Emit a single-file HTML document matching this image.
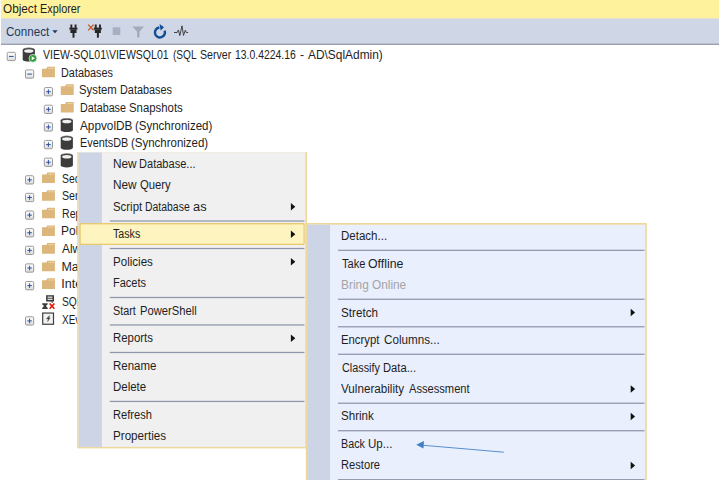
<!DOCTYPE html><html><head><meta charset="utf-8"><title>Object Explorer</title><style>
html,body{margin:0;padding:0;background:#fff;}
body{width:719px;height:489px;position:relative;overflow:hidden;font-family:"Liberation Sans", sans-serif;}
.a{position:absolute;}
.t{position:absolute;white-space:pre;transform-origin:0 0;line-height:16px;height:16px;}
.sep{position:absolute;height:1px;background:#a4abbd;}
</style></head><body>
<svg class="a" style="left:0;top:0" width="719" height="46" viewBox="0 0 719 46"><rect x="1" y="18" width="718" height="26.5" fill="#cfd6e5"/><rect x="1" y="0" width="718" height="18.4" fill="#fff29d"/><rect x="1" y="43.7" width="718" height="1.15" fill="#8c919f"/></svg>
<svg class="a" style="left:0;top:0" width="719" height="489" viewBox="0 0 719 489">
<defs><linearGradient id="bx" x1="0" y1="0" x2="0" y2="1"><stop offset="0" stop-color="#ffffff"/><stop offset="1" stop-color="#dcdcdc"/></linearGradient></defs>
<path d="M52.3 30.3 L57.7 30.3 L55 33.2 Z" fill="#1e395b"/>
<rect x="70.4" y="24.5" width="1.9" height="3.4" fill="#262626"/>
<rect x="74.6" y="24.5" width="1.9" height="3.4" fill="#262626"/>
<rect x="69.4" y="27.6" width="8" height="2.1" fill="#262626"/>
<rect x="70.4" y="29.5" width="6.1" height="3.5" fill="#262626"/>
<rect x="72.5" y="32.8" width="2" height="4.9" fill="#262626"/>
<rect x="94.8" y="24.5" width="1.9" height="3.4" fill="#262626"/>
<rect x="99.0" y="24.5" width="1.9" height="3.4" fill="#262626"/>
<rect x="93.8" y="27.6" width="8" height="2.1" fill="#262626"/>
<rect x="94.8" y="29.5" width="6.1" height="3.5" fill="#262626"/>
<rect x="96.9" y="32.8" width="2" height="4.9" fill="#262626"/>
<path d="M88.2 24.6 L93.6 30.4 M93.6 24.6 L88.2 30.4" stroke="#c4541d" stroke-width="1.3" fill="none"/>
<rect x="112.7" y="27.3" width="7.6" height="7.7" fill="#a8afc3"/>
<path d="M132.5 26.4 L144 26.4 L139.5 31.8 L139.5 37.5 L137.1 37.5 L137.1 31.8 Z" fill="#a3aabc"/>
<path d="M164.6 30.6 A5 5 0 1 1 159.4 27.45" stroke="#0f4d95" stroke-width="2.4" fill="none"/>
<path d="M159.6 23.9 L164.0 27.3 L160.6 30.6 Z" fill="#0f4d95"/>
<path d="M174 32.5 L177.2 32.5 L178.4 30.0 L179.8 35.6 L182 25.8 L183.5 35.4 L185.3 30.2 L186.3 32.5 L188.1 32.5" stroke="#333" stroke-width="0.9" fill="none" stroke-linejoin="round"/>
<rect x="7.20" y="52.30" width="8.2" height="8.3" rx="1.2" fill="url(#bx)" stroke="#8f8f8f" stroke-width="0.9"/>
<path d="M9.00 56.45 L13.60 56.45" stroke="#2f52a3" stroke-width="1.0"/>
<path d="M22.70 49.70 A6.10 2.0 0 0 1 34.90 49.70 L34.90 59.70 A6.10 1.9 0 0 1 22.70 59.70 Z" fill="#3c3c3c"/>
<path d="M23.00 49.70 A5.80 1.8 0 0 1 34.60 49.70" fill="none" stroke="#8a8a8a" stroke-width="0.6"/>
<ellipse cx="28.80" cy="50.90" rx="4.7" ry="1.75" fill="#f0f0f0"/>
<circle cx="32.9" cy="58.30" r="3.9" fill="#2e9b34" stroke="#e6f2e6" stroke-width="0.7"/>
<path d="M31.7 56.30 L35.0 58.30 L31.7 60.30 Z" fill="#ffffff"/>
<rect x="25.50" y="69.93" width="8.2" height="8.3" rx="1.2" fill="url(#bx)" stroke="#8f8f8f" stroke-width="0.9"/>
<path d="M27.30 74.08 L31.90 74.08" stroke="#2f52a3" stroke-width="1.0"/>
<path d="M42.00 68.63 L46.30 68.63 L47.30 66.73 L54.90 66.73 L54.90 77.33 L42.00 77.33 Z" fill="#dcb67a"/>
<rect x="48.20" y="67.93" width="5.8" height="0.9" fill="#ecd6b0"/>
<rect x="44.30" y="87.56" width="8.2" height="8.3" rx="1.2" fill="url(#bx)" stroke="#8f8f8f" stroke-width="0.9"/>
<path d="M46.10 91.71 L50.70 91.71" stroke="#2f52a3" stroke-width="1.0"/>
<path d="M48.40 89.41 L48.40 94.01" stroke="#2f52a3" stroke-width="1.0"/>
<path d="M60.80 86.26 L65.10 86.26 L66.10 84.36 L73.70 84.36 L73.70 94.96 L60.80 94.96 Z" fill="#dcb67a"/>
<rect x="67.00" y="85.56" width="5.8" height="0.9" fill="#ecd6b0"/>
<rect x="44.30" y="105.19" width="8.2" height="8.3" rx="1.2" fill="url(#bx)" stroke="#8f8f8f" stroke-width="0.9"/>
<path d="M46.10 109.34 L50.70 109.34" stroke="#2f52a3" stroke-width="1.0"/>
<path d="M48.40 107.04 L48.40 111.64" stroke="#2f52a3" stroke-width="1.0"/>
<path d="M60.80 103.89 L65.10 103.89 L66.10 101.99 L73.70 101.99 L73.70 112.59 L60.80 112.59 Z" fill="#dcb67a"/>
<rect x="67.00" y="103.19" width="5.8" height="0.9" fill="#ecd6b0"/>
<rect x="44.30" y="122.82" width="8.2" height="8.3" rx="1.2" fill="url(#bx)" stroke="#8f8f8f" stroke-width="0.9"/>
<path d="M46.10 126.97 L50.70 126.97" stroke="#2f52a3" stroke-width="1.0"/>
<path d="M48.40 124.67 L48.40 129.27" stroke="#2f52a3" stroke-width="1.0"/>
<path d="M60.70 120.22 A6.10 2.0 0 0 1 72.90 120.22 L72.90 130.22 A6.10 1.9 0 0 1 60.70 130.22 Z" fill="#3c3c3c"/>
<path d="M61.00 120.22 A5.80 1.8 0 0 1 72.60 120.22" fill="none" stroke="#8a8a8a" stroke-width="0.6"/>
<ellipse cx="66.80" cy="121.42" rx="4.7" ry="1.75" fill="#f0f0f0"/>
<rect x="44.30" y="140.45" width="8.2" height="8.3" rx="1.2" fill="url(#bx)" stroke="#8f8f8f" stroke-width="0.9"/>
<path d="M46.10 144.60 L50.70 144.60" stroke="#2f52a3" stroke-width="1.0"/>
<path d="M48.40 142.30 L48.40 146.90" stroke="#2f52a3" stroke-width="1.0"/>
<path d="M60.70 137.85 A6.10 2.0 0 0 1 72.90 137.85 L72.90 147.85 A6.10 1.9 0 0 1 60.70 147.85 Z" fill="#3c3c3c"/>
<path d="M61.00 137.85 A5.80 1.8 0 0 1 72.60 137.85" fill="none" stroke="#8a8a8a" stroke-width="0.6"/>
<ellipse cx="66.80" cy="139.05" rx="4.7" ry="1.75" fill="#f0f0f0"/>
<rect x="44.30" y="158.08" width="8.2" height="8.3" rx="1.2" fill="url(#bx)" stroke="#8f8f8f" stroke-width="0.9"/>
<path d="M46.10 162.23 L50.70 162.23" stroke="#2f52a3" stroke-width="1.0"/>
<path d="M48.40 159.93 L48.40 164.53" stroke="#2f52a3" stroke-width="1.0"/>
<path d="M60.70 155.48 A6.10 2.0 0 0 1 72.90 155.48 L72.90 165.48 A6.10 1.9 0 0 1 60.70 165.48 Z" fill="#3c3c3c"/>
<path d="M61.00 155.48 A5.80 1.8 0 0 1 72.60 155.48" fill="none" stroke="#8a8a8a" stroke-width="0.6"/>
<ellipse cx="66.80" cy="156.68" rx="4.7" ry="1.75" fill="#f0f0f0"/>
<rect x="25.50" y="175.71" width="8.2" height="8.3" rx="1.2" fill="url(#bx)" stroke="#8f8f8f" stroke-width="0.9"/>
<path d="M27.30 179.86 L31.90 179.86" stroke="#2f52a3" stroke-width="1.0"/>
<path d="M29.60 177.56 L29.60 182.16" stroke="#2f52a3" stroke-width="1.0"/>
<path d="M42.00 174.41 L46.30 174.41 L47.30 172.51 L54.90 172.51 L54.90 183.11 L42.00 183.11 Z" fill="#dcb67a"/>
<rect x="48.20" y="173.71" width="5.8" height="0.9" fill="#ecd6b0"/>
<rect x="25.50" y="193.34" width="8.2" height="8.3" rx="1.2" fill="url(#bx)" stroke="#8f8f8f" stroke-width="0.9"/>
<path d="M27.30 197.49 L31.90 197.49" stroke="#2f52a3" stroke-width="1.0"/>
<path d="M29.60 195.19 L29.60 199.79" stroke="#2f52a3" stroke-width="1.0"/>
<path d="M42.00 192.04 L46.30 192.04 L47.30 190.14 L54.90 190.14 L54.90 200.74 L42.00 200.74 Z" fill="#dcb67a"/>
<rect x="48.20" y="191.34" width="5.8" height="0.9" fill="#ecd6b0"/>
<rect x="25.50" y="210.97" width="8.2" height="8.3" rx="1.2" fill="url(#bx)" stroke="#8f8f8f" stroke-width="0.9"/>
<path d="M27.30 215.12 L31.90 215.12" stroke="#2f52a3" stroke-width="1.0"/>
<path d="M29.60 212.82 L29.60 217.42" stroke="#2f52a3" stroke-width="1.0"/>
<path d="M42.00 209.67 L46.30 209.67 L47.30 207.77 L54.90 207.77 L54.90 218.37 L42.00 218.37 Z" fill="#dcb67a"/>
<rect x="48.20" y="208.97" width="5.8" height="0.9" fill="#ecd6b0"/>
<rect x="25.50" y="228.60" width="8.2" height="8.3" rx="1.2" fill="url(#bx)" stroke="#8f8f8f" stroke-width="0.9"/>
<path d="M27.30 232.75 L31.90 232.75" stroke="#2f52a3" stroke-width="1.0"/>
<path d="M29.60 230.45 L29.60 235.05" stroke="#2f52a3" stroke-width="1.0"/>
<path d="M42.00 227.30 L46.30 227.30 L47.30 225.40 L54.90 225.40 L54.90 236.00 L42.00 236.00 Z" fill="#dcb67a"/>
<rect x="48.20" y="226.60" width="5.8" height="0.9" fill="#ecd6b0"/>
<rect x="25.50" y="246.23" width="8.2" height="8.3" rx="1.2" fill="url(#bx)" stroke="#8f8f8f" stroke-width="0.9"/>
<path d="M27.30 250.38 L31.90 250.38" stroke="#2f52a3" stroke-width="1.0"/>
<path d="M29.60 248.08 L29.60 252.68" stroke="#2f52a3" stroke-width="1.0"/>
<path d="M42.00 244.93 L46.30 244.93 L47.30 243.03 L54.90 243.03 L54.90 253.63 L42.00 253.63 Z" fill="#dcb67a"/>
<rect x="48.20" y="244.23" width="5.8" height="0.9" fill="#ecd6b0"/>
<rect x="25.50" y="263.86" width="8.2" height="8.3" rx="1.2" fill="url(#bx)" stroke="#8f8f8f" stroke-width="0.9"/>
<path d="M27.30 268.01 L31.90 268.01" stroke="#2f52a3" stroke-width="1.0"/>
<path d="M29.60 265.71 L29.60 270.31" stroke="#2f52a3" stroke-width="1.0"/>
<path d="M42.00 262.56 L46.30 262.56 L47.30 260.66 L54.90 260.66 L54.90 271.26 L42.00 271.26 Z" fill="#dcb67a"/>
<rect x="48.20" y="261.86" width="5.8" height="0.9" fill="#ecd6b0"/>
<rect x="25.50" y="281.49" width="8.2" height="8.3" rx="1.2" fill="url(#bx)" stroke="#8f8f8f" stroke-width="0.9"/>
<path d="M27.30 285.64 L31.90 285.64" stroke="#2f52a3" stroke-width="1.0"/>
<path d="M29.60 283.34 L29.60 287.94" stroke="#2f52a3" stroke-width="1.0"/>
<path d="M42.00 280.19 L46.30 280.19 L47.30 278.29 L54.90 278.29 L54.90 288.89 L42.00 288.89 Z" fill="#dcb67a"/>
<rect x="48.20" y="279.49" width="5.8" height="0.9" fill="#ecd6b0"/>
<rect x="46.1" y="295.22" width="7.9" height="6.3" fill="#3b3b3b"/>
<path d="M50.6 301.42 L53.2 301.42 L52.4 302.92 Z" fill="#3b3b3b"/>
<rect x="47.6" y="296.62" width="4.9" height="1.1" fill="#fff"/><rect x="47.6" y="298.72" width="4.9" height="1.1" fill="#fff"/>
<path d="M42.2 303.22 L47.7 303.22 L47.7 304.22 L45.9 306.12 L47.7 307.92 L47.7 308.92 L42.2 308.92 L42.2 307.92 L44.0 306.12 L42.2 304.22 Z" fill="#3b3b3b"/>
<path d="M49.6 303.52 L54.4 308.72 M54.4 303.52 L49.6 308.72" stroke="#e81500" stroke-width="1.6"/>
<rect x="25.50" y="316.75" width="8.2" height="8.3" rx="1.2" fill="url(#bx)" stroke="#8f8f8f" stroke-width="0.9"/>
<path d="M27.30 320.90 L31.90 320.90" stroke="#2f52a3" stroke-width="1.0"/>
<path d="M29.60 318.60 L29.60 323.20" stroke="#2f52a3" stroke-width="1.0"/>
<rect x="42.7" y="313.05" width="10.8" height="11.2" fill="#f2f2f2" stroke="#3f3f3f" stroke-width="1.2"/>
<path d="M49.6 315.55 L46.4 318.85 L48.4 318.85 L47.6 321.55 L50.2 317.85 L48.6 317.85 Z" fill="#3b3b3b" stroke="#3b3b3b" stroke-width="0.4"/>
</svg>
<div class="t" style="left:3.00px;top:1.00px;font-size:12.5px;color:#1e1e1e;transform:scaleX(0.9402);">Object</div>
<div class="t" style="left:39.86px;top:1.00px;font-size:12.5px;color:#1e1e1e;transform:scaleX(0.8690);">Explorer</div>
<div class="t" style="left:5.78px;top:24.00px;font-size:12.5px;color:#1e395b;transform:scaleX(0.9277);">Connect</div>
<div class="t" style="left:42.65px;top:47.00px;font-size:12.5px;color:#1e1e1e;transform:scaleX(0.8422);">VIEW-SQL01\VIEWSQL01</div>
<div class="t" style="left:173.01px;top:47.00px;font-size:12.5px;color:#1e1e1e;transform:scaleX(0.8092);">(SQL</div>
<div class="t" style="left:200.18px;top:47.00px;font-size:12.5px;color:#1e1e1e;transform:scaleX(0.8498);">Server</div>
<div class="t" style="left:235.22px;top:47.00px;font-size:12.5px;color:#1e1e1e;transform:scaleX(0.8318);">13.0.4224.16</div>
<div class="t" style="left:299.89px;top:47.00px;font-size:12.5px;color:#1e1e1e;transform:scaleX(0.9720);">-</div>
<div class="t" style="left:307.64px;top:47.00px;font-size:12.5px;color:#1e1e1e;transform:scaleX(0.9529);">AD\SqlAdmin)</div>
<div class="t" style="left:61.46px;top:65.00px;font-size:12.5px;color:#1e1e1e;transform:scaleX(0.8706);">Databases</div>
<div class="t" style="left:79.32px;top:82.00px;font-size:12.5px;color:#1e1e1e;transform:scaleX(0.9070);">System</div>
<div class="t" style="left:119.96px;top:82.00px;font-size:12.5px;color:#1e1e1e;transform:scaleX(0.8689);">Databases</div>
<div class="t" style="left:79.77px;top:100.00px;font-size:12.5px;color:#1e1e1e;transform:scaleX(0.8582);">Database</div>
<div class="t" style="left:129.02px;top:100.00px;font-size:12.5px;color:#1e1e1e;transform:scaleX(0.9101);">Snapshots</div>
<div class="t" style="left:79.85px;top:118.00px;font-size:12.5px;color:#1e1e1e;transform:scaleX(0.9427);">AppvolDB</div>
<div class="t" style="left:134.89px;top:118.00px;font-size:12.5px;color:#1e1e1e;transform:scaleX(0.9187);">(Synchronized)</div>
<div class="t" style="left:79.76px;top:135.00px;font-size:12.5px;color:#1e1e1e;transform:scaleX(0.8696);">EventsDB</div>
<div class="t" style="left:130.59px;top:135.00px;font-size:12.5px;color:#1e1e1e;transform:scaleX(0.9175);">(Synchronized)</div>
<div class="t" style="left:61.60px;top:171.00px;font-size:12.5px;color:#1e1e1e;transform:scaleX(0.8300);">Security</div>
<div class="t" style="left:61.58px;top:188.00px;font-size:12.5px;color:#1e1e1e;transform:scaleX(0.8500);">Server Objects</div>
<div class="t" style="left:61.59px;top:206.00px;font-size:12.5px;color:#1e1e1e;transform:scaleX(0.8450);">Replication</div>
<div class="t" style="left:61.46px;top:223.00px;font-size:12.5px;color:#1e1e1e;transform:scaleX(0.9600);">PolyBase</div>
<div class="t" style="left:62.35px;top:241.00px;font-size:12.5px;color:#1e1e1e;transform:scaleX(0.9500);">Always On High Availability</div>
<div class="t" style="left:61.42px;top:259.00px;font-size:12.5px;color:#1e1e1e;transform:scaleX(1.0000);">Management</div>
<div class="t" style="left:61.36px;top:276.00px;font-size:12.5px;color:#1e1e1e;transform:scaleX(1.0000);">Integration Services Catalogs</div>
<div class="t" style="left:61.61px;top:294.00px;font-size:12.5px;color:#1e1e1e;transform:scaleX(0.8200);">SQL Server Agent (Agent XPs disabled)</div>
<div class="t" style="left:62.25px;top:312.00px;font-size:12.5px;color:#1e1e1e;transform:scaleX(0.8000);">XEvent Profiler</div>
<svg class="a" style="left:0;top:0" width="719" height="489" viewBox="0 0 719 489">
<rect x="77.2" y="152.2" width="229.8" height="296.20" fill="#efd89c"/>
<rect x="78.7" y="152.2" width="226.7" height="294.70" fill="#f0f0f0"/>
<rect x="78.7" y="152.6" width="23.2" height="294.30" fill="#cdd4e6"/>
<rect x="109.8" y="220.40" width="194.6" height="1.25" fill="#8f97ac"/>
<rect x="109.8" y="247.90" width="194.6" height="1.25" fill="#8f97ac"/>
<rect x="109.8" y="296.85" width="194.6" height="1.25" fill="#8f97ac"/>
<rect x="109.8" y="324.35" width="194.6" height="1.25" fill="#8f97ac"/>
<rect x="109.8" y="351.85" width="194.6" height="1.25" fill="#8f97ac"/>
<rect x="109.8" y="400.80" width="194.6" height="1.25" fill="#8f97ac"/>
<rect x="79.5" y="223.05" width="225.2" height="21.9" rx="1.2" fill="#e7c96f"/>
<rect x="80.7" y="224.40" width="222.8" height="19.3" fill="#fdf4bf"/>
<path d="M290.90 203.10 L295.30 206.80 L290.90 210.50 Z" fill="#111"/>
<path d="M290.90 230.60 L295.30 234.30 L290.90 238.00 Z" fill="#111"/>
<path d="M290.90 258.10 L295.30 261.80 L290.90 265.50 Z" fill="#111"/>
<path d="M290.90 334.55 L295.30 338.25 L290.90 341.95 Z" fill="#111"/>
<rect x="305.8" y="223.0" width="341" height="257" fill="#efd89c"/>
<rect x="307.1" y="224.7" width="338.0" height="255.3" fill="#eaeffd"/>
<rect x="307.1" y="224.7" width="23.0" height="255.3" fill="#cdd4e6"/>
<rect x="338" y="249.70" width="306.5" height="1.25" fill="#8f97ac"/>
<rect x="338" y="298.65" width="306.5" height="1.25" fill="#8f97ac"/>
<rect x="338" y="326.15" width="306.5" height="1.25" fill="#8f97ac"/>
<rect x="338" y="353.65" width="306.5" height="1.25" fill="#8f97ac"/>
<rect x="338" y="402.60" width="306.5" height="1.25" fill="#8f97ac"/>
<rect x="338" y="430.10" width="306.5" height="1.25" fill="#8f97ac"/>
<rect x="338" y="479.05" width="306.5" height="1.25" fill="#8f97ac"/>
<path d="M630.70 308.85 L635.10 312.55 L630.70 316.25 Z" fill="#111"/>
<path d="M630.70 385.30 L635.10 389.00 L630.70 392.70 Z" fill="#111"/>
<path d="M630.70 412.80 L635.10 416.50 L630.70 420.20 Z" fill="#111"/>
<path d="M630.70 461.75 L635.10 465.45 L630.70 469.15 Z" fill="#111"/>
<rect x="0" y="480" width="719" height="9" fill="#fff"/>
<line x1="421" y1="445.1" x2="503.8" y2="452.2" stroke="#4583c6" stroke-width="0.9"/><path d="M416.2 444.7 L423.9 441.0 L423.5 448.5 Z" fill="#3f7fc4"/>
</svg>
<div class="t" style="left:112.78px;top:156.00px;font-size:12.5px;color:#1e1e1e;transform:scaleX(0.9450);">New</div>
<div class="t" style="left:139.35px;top:156.00px;font-size:12.5px;color:#1e1e1e;transform:scaleX(0.8849);">Database...</div>
<div class="t" style="left:112.78px;top:177.00px;font-size:12.5px;color:#1e1e1e;transform:scaleX(0.9450);">New</div>
<div class="t" style="left:140.01px;top:177.00px;font-size:12.5px;color:#1e1e1e;transform:scaleX(0.9029);">Query</div>
<div class="t" style="left:112.81px;top:199.00px;font-size:12.5px;color:#1e1e1e;transform:scaleX(0.9122);">Script</div>
<div class="t" style="left:145.10px;top:199.00px;font-size:12.5px;color:#1e1e1e;transform:scaleX(0.8351);">Database</div>
<div class="t" style="left:192.69px;top:199.00px;font-size:12.5px;color:#1e1e1e;transform:scaleX(1.0270);">as</div>
<div class="t" style="left:113.45px;top:226.00px;font-size:12.5px;color:#1e1e1e;transform:scaleX(0.8514);">Tasks</div>
<div class="t" style="left:112.60px;top:254.00px;font-size:12.5px;color:#1e1e1e;transform:scaleX(0.9259);">Policies</div>
<div class="t" style="left:112.65px;top:275.00px;font-size:12.5px;color:#1e1e1e;transform:scaleX(0.8817);">Facets</div>
<div class="t" style="left:112.86px;top:303.00px;font-size:12.5px;color:#1e1e1e;transform:scaleX(0.8668);">Start</div>
<div class="t" style="left:139.63px;top:303.00px;font-size:12.5px;color:#1e1e1e;transform:scaleX(0.8983);">PowerShell</div>
<div class="t" style="left:112.62px;top:330.00px;font-size:12.5px;color:#1e1e1e;transform:scaleX(0.9112);">Reports</div>
<div class="t" style="left:112.61px;top:358.00px;font-size:12.5px;color:#1e1e1e;transform:scaleX(0.9179);">Rename</div>
<div class="t" style="left:112.61px;top:379.00px;font-size:12.5px;color:#1e1e1e;transform:scaleX(0.9179);">Delete</div>
<div class="t" style="left:112.64px;top:407.00px;font-size:12.5px;color:#1e1e1e;transform:scaleX(0.8920);">Refresh</div>
<div class="t" style="left:112.60px;top:428.00px;font-size:12.5px;color:#1e1e1e;transform:scaleX(0.9302);">Properties</div>
<div class="t" style="left:340.91px;top:228.00px;font-size:12.5px;color:#1e1e1e;transform:scaleX(0.9223);">Detach...</div>
<div class="t" style="left:341.75px;top:256.00px;font-size:12.5px;color:#1e1e1e;transform:scaleX(0.8891);">Take</div>
<div class="t" style="left:367.89px;top:256.00px;font-size:12.5px;color:#1e1e1e;transform:scaleX(0.9857);">Offline</div>
<div class="t" style="left:341.27px;top:277.00px;font-size:12.5px;color:#a2a4a5;transform:scaleX(0.9514);">Bring</div>
<div class="t" style="left:372.20px;top:277.00px;font-size:12.5px;color:#a2a4a5;transform:scaleX(0.9460);">Online</div>
<div class="t" style="left:340.89px;top:305.00px;font-size:12.5px;color:#1e1e1e;transform:scaleX(0.9335);">Stretch</div>
<div class="t" style="left:341.02px;top:332.00px;font-size:12.5px;color:#1e1e1e;transform:scaleX(0.9060);">Encrypt</div>
<div class="t" style="left:383.88px;top:332.00px;font-size:12.5px;color:#1e1e1e;transform:scaleX(0.9337);">Columns...</div>
<div class="t" style="left:341.70px;top:360.00px;font-size:12.5px;color:#1e1e1e;transform:scaleX(0.8674);">Classify</div>
<div class="t" style="left:383.23px;top:360.00px;font-size:12.5px;color:#1e1e1e;transform:scaleX(0.8981);">Data...</div>
<div class="t" style="left:341.34px;top:381.00px;font-size:12.5px;color:#1e1e1e;transform:scaleX(0.9330);">Vulnerability</div>
<div class="t" style="left:409.36px;top:381.00px;font-size:12.5px;color:#1e1e1e;transform:scaleX(0.8904);">Assessment</div>
<div class="t" style="left:340.90px;top:408.00px;font-size:12.5px;color:#1e1e1e;transform:scaleX(0.9255);">Shrink</div>
<div class="t" style="left:340.97px;top:436.00px;font-size:12.5px;color:#1e1e1e;transform:scaleX(0.8587);">Back</div>
<div class="t" style="left:367.99px;top:436.00px;font-size:12.5px;color:#1e1e1e;transform:scaleX(0.9263);">Up...</div>
<div class="t" style="left:340.94px;top:457.00px;font-size:12.5px;color:#1e1e1e;transform:scaleX(0.8926);">Restore</div>
</body></html>
